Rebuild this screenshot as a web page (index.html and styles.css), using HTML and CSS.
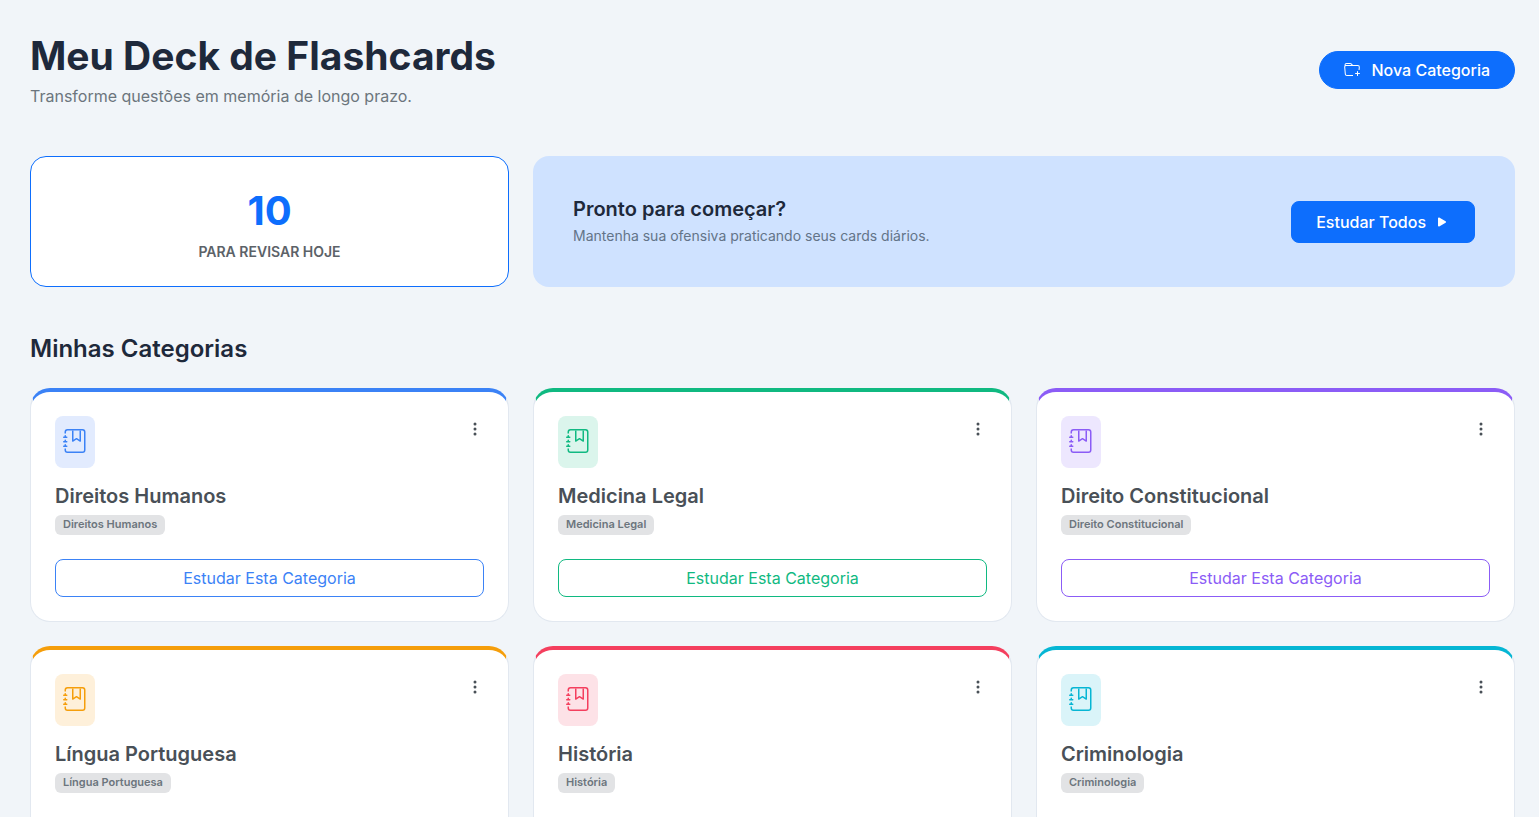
FILE: index.html
```html
<!DOCTYPE html>
<html lang="pt-BR">
<head>
  <meta charset="UTF-8">
  <meta name="viewport" content="width=device-width, initial-scale=1">
  <title>Meu Deck de Flashcards</title>
  <link rel="stylesheet" href="styles.css">
</head>
<body>
  <svg class="sprite" aria-hidden="true">
    <symbol id="journal" viewBox="0 0 16 16">
      <path fill-rule="evenodd" d="M6 8V1h1v6.117L8.743 6.07a.5.5 0 0 1 .514 0L11 7.117V1h1v7a.5.5 0 0 1-.757.429L9 7.083 6.757 8.43A.5.5 0 0 1 6 8"/>
      <path d="M3 0h10a2 2 0 0 1 2 2v12a2 2 0 0 1-2 2H3a2 2 0 0 1-2-2v-1h1v1a1 1 0 0 0 1 1h10a1 1 0 0 0 1-1V2a1 1 0 0 0-1-1H3a1 1 0 0 0-1 1v1H1V2a2 2 0 0 1 2-2"/>
      <path d="M1 5v-.5a.5.5 0 0 1 1 0V5h.5a.5.5 0 0 1 0 1h-2a.5.5 0 0 1 0-1zm0 3v-.5a.5.5 0 0 1 1 0V8h.5a.5.5 0 0 1 0 1h-2a.5.5 0 0 1 0-1zm0 3v-.5a.5.5 0 0 1 1 0v.5h.5a.5.5 0 0 1 0 1h-2a.5.5 0 0 1 0-1z"/>
    </symbol>
    <symbol id="dots" viewBox="0 0 16 16">
      <path d="M9.500 13a1.500 1.500 0 1 1-3 0 1.500 1.500 0 0 1 3 0m0-5a1.500 1.500 0 1 1-3 0 1.500 1.500 0 0 1 3 0m0-5a1.500 1.500 0 1 1-3 0 1.500 1.500 0 0 1 3 0"/>
    </symbol>
    <symbol id="folder-plus" viewBox="0 0 16 16">
      <path d="m.5 3 .04.87a2 2 0 0 0-.342 1.311l.637 7A2 2 0 0 0 2.826 14H9v-1H2.826a1 1 0 0 1-.995-.91l-.637-7A1 1 0 0 1 2.190 4h11.620a1 1 0 0 1 .996 1.090L14.540 8h1.005l.256-2.819A2 2 0 0 0 13.810 3H9.828a2 2 0 0 1-1.414-.586l-.828-.828A2 2 0 0 0 6.172 1H2.500a2 2 0 0 0-2 2m5.672-1a1 1 0 0 1 .707.293L7.586 3H2.190q-.362.002-.683.120L1.500 2.980a1 1 0 0 1 1-.980z"/>
      <path d="M13.500 9a.5.5 0 0 1 .5.5V11h1.500a.5.5 0 1 1 0 1H14v1.500a.5.5 0 1 1-1 0V12h-1.500a.5.5 0 0 1 0-1H13V9.500a.5.5 0 0 1 .5-.5"/>
    </symbol>
    <symbol id="play" viewBox="0 0 16 16">
      <path d="m11.596 8.697-6.363 3.692c-.54.313-1.233-.066-1.233-.697V4.308c0-.63.692-1.010 1.233-.696l6.363 3.692a.802.802 0 0 1 0 1.393"/>
    </symbol>
  </svg>

  <main class="page">
    <header class="page-header">
      <div>
        <h1>Meu Deck de Flashcards</h1>
        <p class="subtitle">Transforme questões em memória de longo prazo.</p>
      </div>
      <button type="button" class="btn btn-pill">
        <svg class="icon"><use href="#folder-plus"/></svg>
        Nova Categoria
      </button>
    </header>

    <section class="grid stats">
      <div class="stat-card">
        <div class="stat-number">10</div>
        <div class="stat-label">PARA REVISAR HOJE</div>
      </div>
      <div class="cta-card">
        <div>
          <h3>Pronto para começar?</h3>
          <p>Mantenha sua ofensiva praticando seus cards diários.</p>
        </div>
        <button type="button" class="btn btn-study">
          Estudar Todos
          <svg class="icon"><use href="#play"/></svg>
        </button>
      </div>
    </section>

    <h2>Minhas Categorias</h2>
    <section class="grid">
      <article class="card blue">
        <div class="card-top">
          <span class="card-icon"><svg><use href="#journal"/></svg></span>
          <button type="button" class="menu-btn" aria-label="Opções"><svg class="icon"><use href="#dots"/></svg></button>
        </div>
        <h3>Direitos Humanos</h3>
        <span class="badge">Direitos Humanos</span>
        <button type="button" class="btn-outline">Estudar Esta Categoria</button>
      </article>
      <article class="card green">
        <div class="card-top">
          <span class="card-icon"><svg><use href="#journal"/></svg></span>
          <button type="button" class="menu-btn" aria-label="Opções"><svg class="icon"><use href="#dots"/></svg></button>
        </div>
        <h3>Medicina Legal</h3>
        <span class="badge">Medicina Legal</span>
        <button type="button" class="btn-outline">Estudar Esta Categoria</button>
      </article>
      <article class="card purple">
        <div class="card-top">
          <span class="card-icon"><svg><use href="#journal"/></svg></span>
          <button type="button" class="menu-btn" aria-label="Opções"><svg class="icon"><use href="#dots"/></svg></button>
        </div>
        <h3>Direito Constitucional</h3>
        <span class="badge">Direito Constitucional</span>
        <button type="button" class="btn-outline">Estudar Esta Categoria</button>
      </article>
      <article class="card orange">
        <div class="card-top">
          <span class="card-icon"><svg><use href="#journal"/></svg></span>
          <button type="button" class="menu-btn" aria-label="Opções"><svg class="icon"><use href="#dots"/></svg></button>
        </div>
        <h3>Língua Portuguesa</h3>
        <span class="badge">Língua Portuguesa</span>
        <button type="button" class="btn-outline">Estudar Esta Categoria</button>
      </article>
      <article class="card red">
        <div class="card-top">
          <span class="card-icon"><svg><use href="#journal"/></svg></span>
          <button type="button" class="menu-btn" aria-label="Opções"><svg class="icon"><use href="#dots"/></svg></button>
        </div>
        <h3>História</h3>
        <span class="badge">História</span>
        <button type="button" class="btn-outline">Estudar Esta Categoria</button>
      </article>
      <article class="card cyan">
        <div class="card-top">
          <span class="card-icon"><svg><use href="#journal"/></svg></span>
          <button type="button" class="menu-btn" aria-label="Opções"><svg class="icon"><use href="#dots"/></svg></button>
        </div>
        <h3>Criminologia</h3>
        <span class="badge">Criminologia</span>
        <button type="button" class="btn-outline">Estudar Esta Categoria</button>
      </article>
    </section>
  </main>
</body>
</html>
```

FILE: styles.css
```css
* {
  box-sizing: border-box;
}

body {
  margin: 0;
  background: #f1f5f9;
  color: #1e293b;
  font-family: Inter, "Liberation Sans", sans-serif;
  font-size: 16px;
  line-height: 24px;
}

h1, h2, h3, p {
  margin: 0;
}

button {
  font-family: inherit;
  font-size: 16px;
  line-height: 24px;
  cursor: pointer;
}

svg {
  fill: currentColor;
}

.sprite {
  display: none;
}

.icon {
  width: 16px;
  height: 16px;
}

.page {
  padding: 32px 24px 48px 30px;
}

.page-header {
  display: flex;
  justify-content: space-between;
  align-items: center;
  margin-bottom: 48px;
}

h1 {
  font-size: 39px;
  line-height: 48px;
  font-weight: 700;
  margin-bottom: 4px;
}

.subtitle {
  color: #6c757d;
}

h2 {
  font-size: 24px;
  line-height: 28px;
  font-weight: 600;
  margin-bottom: 25px;
}

h3 {
  font-size: 20px;
  line-height: 24px;
  font-weight: 600;
}

.grid {
  display: grid;
  grid-template-columns: repeat(3, minmax(0, 1fr));
  gap: 24px;
}

.stats {
  margin-bottom: 48px;
}

.stat-card {
  background: #fff;
  border: 1px solid #0d6efd;
  border-radius: 16px;
  padding: 24px;
  text-align: center;
}

.stat-number {
  color: #0d6efd;
  font-size: 40px;
  line-height: 60px;
  font-weight: 700;
}

.stat-label {
  color: #5c6268;
  font-size: 14px;
  line-height: 21px;
  font-weight: 600;
}

.cta-card {
  grid-column: span 2;
  display: flex;
  justify-content: space-between;
  align-items: center;
  background: #cfe2ff;
  border-radius: 16px;
  padding: 24px 40px;
}

.cta-card h3 {
  margin-bottom: 4px;
}

.cta-card p {
  color: #637488;
  font-size: 14px;
  line-height: 21px;
}

.btn {
  display: flex;
  align-items: center;
  gap: 12px;
  background: #0d6efd;
  border: 1px solid #0d6efd;
  color: #fff;
  font-weight: 500;
}

.btn-pill {
  border-radius: 24px;
  padding: 6px 24px;
}

.btn-study {
  gap: 8px;
  border-radius: 8px;
  padding: 8px 24px;
}

.card {
  display: flex;
  flex-direction: column;
  align-items: flex-start;
  background: #fff;
  border: 1px solid #e2e8f0;
  border-top: 4px solid var(--accent);
  border-radius: 20px;
  padding: 24px;
}

.card-top {
  display: flex;
  justify-content: space-between;
  align-items: flex-start;
  width: 100%;
  margin-bottom: 16px;
}

.card-icon {
  background: var(--tint);
  color: var(--accent);
  border-radius: 8px;
  padding: 13px 8px 15px;
}

.card-icon svg {
  display: block;
  width: 24px;
  height: 24px;
}

.menu-btn {
  display: flex;
  align-items: center;
  height: 26px;
  padding: 0 1px;
  background: none;
  border: 0;
  color: #495057;
}

.card h3 {
  color: #495057;
  margin-bottom: 7px;
}

.badge {
  background: #e2e3e5;
  color: #6c757d;
  border-radius: 6px;
  padding: 0 8px 2px;
  font-size: 11px;
  line-height: 18px;
  font-weight: 600;
}

.btn-outline {
  width: 100%;
  margin-top: 24px;
  padding: 6px 12px;
  background: #fff;
  border: 1px solid var(--accent);
  border-radius: 8px;
  color: var(--accent);
}

.blue { --accent: #3b82f6; --tint: #e2ebfe; }
.green { --accent: #10b981; --tint: #dbf5ec; }
.purple { --accent: #8b5cf6; --tint: #ede7fe; }
.orange { --accent: #f59e0b; --tint: #fef0da; }
.red { --accent: #f43f5e; --tint: #fde2e7; }
.cyan { --accent: #06b6d4; --tint: #daf4f9; }
```
